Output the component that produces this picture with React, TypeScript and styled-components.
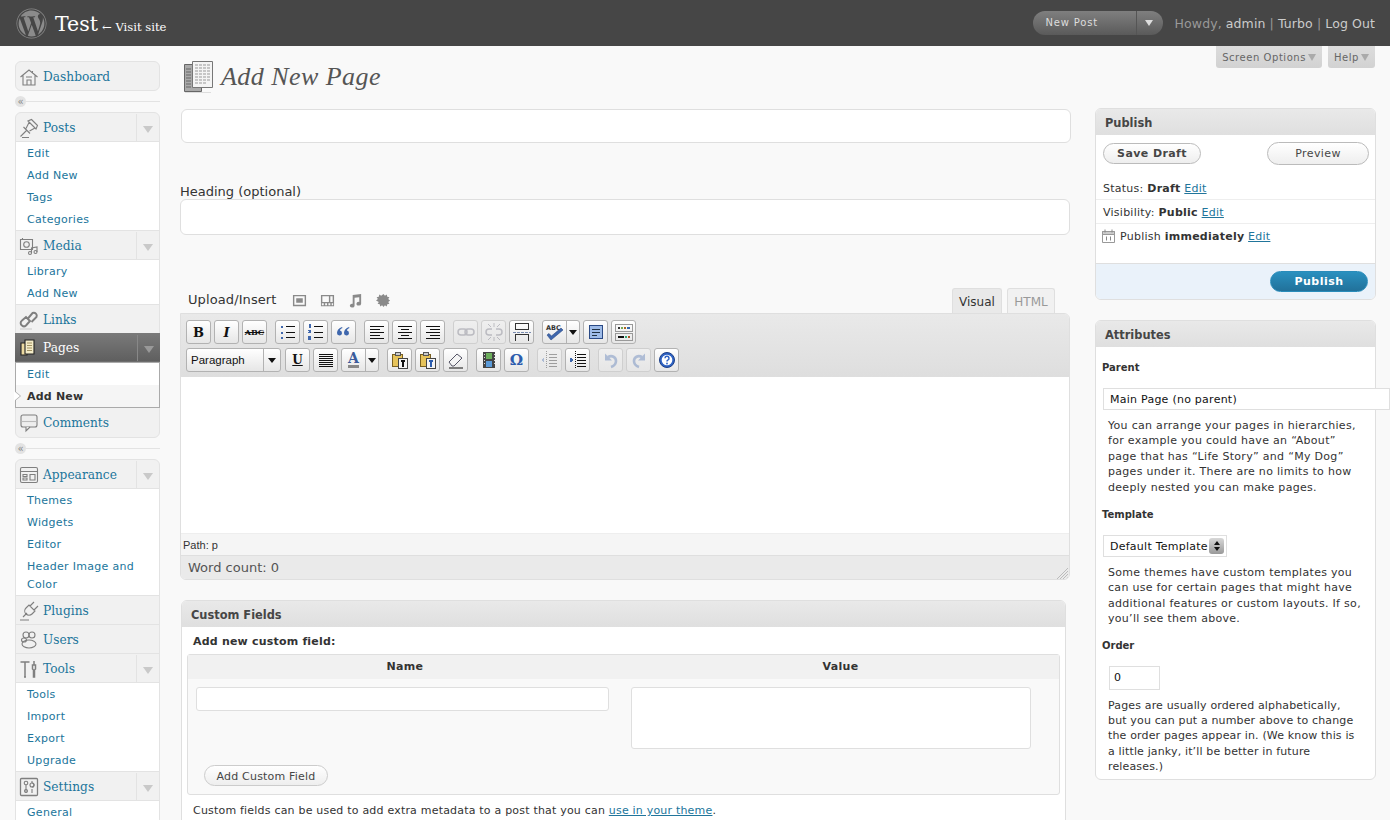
import React from 'react';
import styled, { createGlobalStyle, css } from 'styled-components';
import { FaWordpress } from 'react-icons/fa';

const GlobalStyle = createGlobalStyle`
    html, body { margin: 0; padding: 0; height: 820px; overflow: hidden; background: #f9f9f9; }
    body { font-family: "DejaVu Sans", Verdana, sans-serif; font-size: 11px; color: #333; }
    * { box-sizing: border-box; }
`;

const SERIF = '"DejaVu Serif", Georgia, serif';

const Page = styled.div`
    width: 1390px;
    height: 820px;
    overflow: hidden;
`;

/* top bar */
const TopBar = styled.header`
    display: flex;
    align-items: center;
    height: 46px;
    padding: 0 15px 0 16px;
    background: #464646;
    color: #fff;
`;

const Logo = styled(FaWordpress)`
    width: 31px;
    height: 31px;
    color: #8b8b8b;
    flex: none;
`;

const SiteName = styled.span`
    margin: 2px 0 0 8px;
    font-family: ${SERIF};
    font-size: 20.5px;
    color: #fff;
`;

const VisitSite = styled.a`
    margin: 7px 0 0 4px;
    font-family: ${SERIF};
    font-size: 11.6px;
    color: #fff;
`;

const NewPost = styled.div`
    display: flex;
    align-items: stretch;
    width: 130px;
    height: 24px;
    margin-left: auto;
    border-radius: 12px;
    background: linear-gradient(#7f7f7f, #5a5a5a);
    color: #ddd;
    font-size: 10px;
    letter-spacing: .8px;
`;

const NewPostLabel = styled.span`
    flex: 1;
    padding-left: 13px;
    line-height: 24px;
`;

const NewPostToggle = styled.span`
    display: flex;
    align-items: center;
    justify-content: center;
    width: 27px;
    border-left: 1px solid #555;
    &::after {
        content: '';
        margin-right: 2px;
        border: 4px solid transparent;
        border-top: 6px solid #ddd;
        border-bottom: 0;
    }
`;

const UserInfo = styled.div`
    margin-left: 12px;
    font-size: 12.5px;
    letter-spacing: .1px;
    color: #999;
    a { color: #ccc; }
`;

/* layout */
const Body = styled.div`
    display: flex;
    align-items: flex-start;
`;

const Sidebar = styled.nav`
    flex: none;
    width: 145px;
    margin: 15px 0 0 15px;
`;

const Main = styled.main`
    flex: 1;
    min-width: 0;
    padding-left: 20px;
`;

const ScreenMeta = styled.div`
    display: flex;
    justify-content: flex-end;
    gap: 6px;
    padding-right: 15px;
    height: 22px;
    margin-bottom: -7px;
`;

const MetaTab = styled.button`
    display: flex;
    align-items: center;
    gap: 2px;
    height: 22px;
    padding: 0 6px;
    border: 0;
    border-radius: 0 0 3px 3px;
    background: linear-gradient(#dcdcdc, #d2d2d2);
    font: 10px "DejaVu Sans", sans-serif;
    letter-spacing: .55px;
    color: #666;
    &::after {
        content: '';
        border: 4px solid transparent;
        border-top: 7px solid #aaa;
        border-bottom: 0;
    }
`;

const TitleRow = styled.div`
    display: flex;
    align-items: center;
    height: 32px;
    margin-bottom: 15px;
`;

const TitleIcon = styled.svg`
    width: 29px;
    height: 32px;
    margin-left: 4px;
    flex: none;
`;

const PageTitle = styled.h1`
    margin: 0 0 0 8px;
    font-family: "Liberation Serif", Georgia, serif;
    font-style: italic;
    font-weight: 400;
    font-size: 26px;
    letter-spacing: .45px;
    color: #555;
`;

const Columns = styled.div`
    display: flex;
    gap: 24px;
`;

const LeftColumn = styled.div`
    flex: none;
    width: 891px;
`;

const RightColumn = styled.aside`
    flex: none;
    width: 281px;
    display: flex;
    flex-direction: column;
    gap: 20px;
`;

/* sidebar menu */
const MenuGroup = styled.ul`
    list-style: none;
    margin: 0;
    padding: 0;
    border: 1px solid #e3e3e3;
    border-radius: 6px;
    background: #f1f1f1;
`;

const Separator = styled.div`
    display: flex;
    align-items: center;
    height: 11px;
    margin: 5px 0;
    &::after {
        content: '';
        flex: 1;
        height: 1px;
        background: #e3e3e3;
    }
`;

const SeparatorKnob = styled.span`
    display: flex;
    align-items: center;
    justify-content: center;
    width: 11px;
    height: 11px;
    border-radius: 50%;
    background: #e3e3e3;
    color: #888;
    font-size: 10px;
    line-height: 1;
`;

const MenuHead = styled.div<{ $active?: boolean; $single?: boolean; $flat?: boolean }>`
    display: flex;
    align-items: center;
    height: ${p => (p.$single ? 28 : 29)}px;
    padding: 1px 0 0 3px;
    border-bottom: 1px solid #e3e3e3;
    font-family: ${SERIF};
    font-size: 12.2px;
    color: #21759b;
    ${p => (p.$single || p.$flat) && 'border-bottom: 0;'}
    ${p => p.$active && css`
        margin: -1px -1px 0;
        padding: 2px 0 0 4px;
        border-bottom: 1px solid #6d6d6d;
        background: linear-gradient(#7a7a7a, #5f5f5f);
        color: #fff;
    `}
`;

const MenuLabel = styled.span`
    flex: 1;
    margin-left: 4px;
`;

const MenuToggle = styled.span<{ $active?: boolean }>`
    display: flex;
    align-items: center;
    justify-content: center;
    align-self: stretch;
    width: 23px;
    border-left: 1px solid ${p => (p.$active ? '#888' : '#e3e3e3')};
    &::after {
        content: '';
        border: 5px solid transparent;
        border-top: 7px solid ${p => (p.$active ? '#999' : '#c9c9c9')};
        border-bottom: 0;
        margin-top: 3px;
    }
`;

const MenuIcon = styled.svg.attrs({ viewBox: '0 0 20 20' })`
    width: 20px;
    height: 20px;
    flex: none;
    fill: none;
    stroke: #7f7f7f;
    stroke-width: 1.1;
`;

const SubMenu = styled.ul<{ $active?: boolean }>`
    list-style: none;
    margin: 0;
    padding: 0;
    background: #fff;
    border-bottom: 1px solid #e3e3e3;
    ${p => p.$active && css`
        margin: 0 -1px;
        border: 1px solid #aaa;
    `}
`;

const SubItem = styled.li<{ $current?: boolean }>`
    position: relative;
    padding: 3px 8px 1px 11px;
    line-height: 18px;
    font-size: 11px;
    letter-spacing: .3px;
    color: #21759b;
    ${p => p.$current && css`
        font-weight: 700;
        letter-spacing: .2px;
        color: #333;
        background: #f5f5f5;
        &::before, &::after {
            content: '';
            position: absolute;
            top: 6px;
            border: 5px solid transparent;
            border-right: 0;
        }
        &::before { left: -1px; border-left: 6px solid #aaa; }
        &::after { left: -2px; border-left: 6px solid #fff; }
    `}
`;

/* left column */
const TextField = styled.input<{ $h: number }>`
    display: block;
    width: 890px;
    height: ${p => p.$h}px;
    background: #fff;
    border: 1px solid #dfdfdf;
    border-radius: 6px;
    outline: none;
`;

const FieldLabel = styled.label`
    display: block;
    height: 16px;
    font-size: 13px;
    line-height: 18px;
    color: #333;
`;

const TitleField = styled.div`
    padding: 1px 0 0 1px;
    margin-bottom: 40px;
`;

const MediaRow = styled.div`
    display: flex;
    align-items: flex-end;
    height: 25px;
    margin-top: 53px;
    padding: 0 16px 0 8px;
`;

const UploadLabel = styled.span`
    align-self: center;
    margin: 0 15px 2px 0;
    font-size: 13px;
    letter-spacing: .1px;
    color: #333;
`;

const MediaIcon = styled.svg.attrs({ viewBox: '0 0 16 16' })`
    align-self: center;
    width: 15px;
    height: 15px;
    margin-right: 13px;
    fill: #8a8a8a;
    flex: none;
`;

const EditorTabs = styled.div`
    display: flex;
    gap: 5px;
    margin-left: auto;
    align-self: stretch;
`;

const EditorTab = styled.span<{ $active?: boolean }>`
    display: flex;
    align-items: center;
    justify-content: center;
    height: 25px;
    width: ${p => (p.$active ? 50 : 48)}px;
    padding-top: 2px;
    border: 1px solid #dfdfdf;
    border-bottom: 0;
    border-radius: 3px 3px 0 0;
    font-size: 12px;
    color: ${p => (p.$active ? '#333' : '#999')};
    background: ${p => (p.$active ? '#e9e9e9' : '#f1f1f1')};
`;

const Editor = styled.div`
    width: 890px;
    border: 1px solid #dfdfdf;
    border-radius: 0 6px 6px 6px;
    overflow: hidden;
`;

const Toolbar = styled.div`
    display: flex;
    flex-direction: column;
    gap: 4px;
    height: 63px;
    padding: 6px 5px 0;
    background: linear-gradient(#e9e9e9, #dedede);
`;

const ToolRow = styled.div`
    display: flex;
    gap: 8px;
    height: 24px;
`;

const ToolGroup = styled.div`
    display: flex;
    gap: 3px;
`;

const ToolButton = styled.button<{ $off?: boolean }>`
    display: flex;
    align-items: center;
    justify-content: center;
    width: 25px;
    height: 24px;
    padding: 0;
    border: 1px solid ${p => (p.$off ? '#cfcfcf' : '#b2b2b2')};
    border-radius: 3px;
    background: ${p => (p.$off ? 'linear-gradient(#efefef, #e6e6e6)' : 'linear-gradient(#fff, #e6e6e6)')};
    color: #111;
    font-family: "DejaVu Serif", serif;
    font-size: 13px;
    font-weight: 700;
    line-height: 1;
    svg { opacity: ${p => (p.$off ? 0.35 : 1)}; }
`;

const SplitButton = styled.div`
    display: flex;
    width: 38px;
    height: 24px;
    border: 1px solid #b2b2b2;
    border-radius: 3px;
    background: linear-gradient(#fff, #e6e6e6);
`;

const SplitMain = styled.span`
    flex: 1;
    display: flex;
    align-items: center;
    justify-content: center;
    border-right: 1px solid #b2b2b2;
`;

const SplitArrow = styled.span`
    display: flex;
    align-items: center;
    justify-content: center;
    width: 12px;
    &::after {
        content: '';
        border: 4px solid transparent;
        border-top: 5px solid #111;
        border-bottom: 0;
    }
`;

const FormatSelect = styled(SplitButton)`
    width: 95px;
    margin-right: 1px;
    font-family: "Liberation Sans", sans-serif;
    font-size: 11.5px;
    color: #111;
`;

const FormatLabel = styled(SplitMain)`
    justify-content: flex-start;
    padding-left: 4px;
`;

const FormatArrow = styled(SplitArrow)`
    width: 16px;
`;

const ToolIcon = styled.svg.attrs({ viewBox: '0 0 20 20' })`
    width: 20px;
    height: 20px;
    fill: none;
    stroke: #111;
    stroke-width: 1;
    shape-rendering: crispEdges;
`;

const RoundIcon = styled(ToolIcon)`
    shape-rendering: auto;
`;

const ItalicGlyph = styled.span`
    font-style: italic;
`;

const StrikeGlyph = styled.span`
    font-size: 8px;
    text-decoration: line-through;
`;

const UnderGlyph = styled.span`
    font-size: 12px;
    text-decoration: underline;
`;

const OmegaGlyph = styled.span`
    font-size: 15px;
    color: #2c5cad;
`;

const ColorGlyph = styled.span`
    display: inline-block;
    font: 700 14px ${SERIF};
    color: #3b5c9c;
    line-height: 13px;
    border-bottom: 3px solid #888;
`;

const SpellText = styled.text`
    font: 700 6.500px "DejaVu Sans", sans-serif;
    fill: #333;
    stroke: none;
`;

const EditArea = styled.div`
    height: 156px;
    background: #fff;
`;

const PathBar = styled.div`
    height: 22px;
    padding: 5px 0 0 2px;
    border-top: 1px solid #eee;
    background: #f5f5f5;
    font-family: "Liberation Sans", sans-serif;
    font-size: 11px;
    color: #333;
`;

const WordCount = styled.div`
    display: flex;
    align-items: center;
    justify-content: space-between;
    height: 24px;
    padding: 0 1px 0 7px;
    border-top: 1px solid #dfdfdf;
    background: #eaeaea;
    font-size: 13px;
    color: #555;
`;

const Grip = styled.svg`
    align-self: flex-end;
    width: 12px;
    height: 12px;
    stroke: #bbb;
`;

/* post boxes */
const Postbox = styled.section<{ $w?: number }>`
    width: ${p => (p.$w ? `${p.$w}px` : 'auto')};
    background: #fff;
    border: 1px solid #dfdfdf;
    border-radius: 6px;
`;

const CustomBox = styled(Postbox)`
    margin: 20px 0 0 1px;
`;

const BoxHeader = styled.h3`
    margin: 0;
    height: 26px;
    padding-left: 9px;
    border-radius: 5px 5px 0 0;
    background: linear-gradient(#e9e9e9, #dfdfdf);
    font-size: 11.4px;
    font-weight: 700;
    line-height: 28px;
    color: #464646;
`;

const PublishActions = styled.div`
    display: flex;
    align-items: center;
    justify-content: space-between;
    height: 41px;
    padding: 0 6px 5px 7px;
`;

const PillButton = styled.button<{ $w: number; $h: number; $strong?: boolean }>`
    width: ${p => p.$w}px;
    height: ${p => p.$h}px;
    padding: 0;
    border: 1px solid #bbb;
    border-radius: 12px;
    background: linear-gradient(#fff, #eee);
    font-family: "DejaVu Sans", sans-serif;
    font-size: 11px;
    letter-spacing: .4px;
    font-weight: ${p => (p.$strong ? 700 : 400)};
    color: #464646;
`;

const MiscRow = styled.div<{ $last?: boolean }>`
    display: flex;
    align-items: center;
    gap: 4px;
    height: ${p => (p.$last ? 39 : 24)}px;
    padding: ${p => (p.$last ? '0 0 15px 6px' : '2px 0 0 7px')};
    ${p => !p.$last && 'border-bottom: 1px solid #eee;'}
    font-size: 11px;
    letter-spacing: .25px;
    b { color: #333; }
    a { color: #21759b; text-decoration: underline; }
`;

const CalendarIcon = styled.svg.attrs({ viewBox: '0 0 14 14' })`
    width: 14px;
    height: 14px;
    flex: none;
`;

const PublishFooter = styled.div`
    display: flex;
    align-items: center;
    justify-content: flex-end;
    height: 36px;
    padding-right: 7px;
    border-top: 1px solid #dfdfdf;
    border-radius: 0 0 5px 5px;
    background: #eaf2fa;
`;

const PublishButton = styled.button`
    width: 98px;
    height: 21px;
    padding: 0;
    border: 1px solid #298cba;
    border-radius: 11px;
    background: linear-gradient(#2a90bf, #21719a);
    font: 700 11px "DejaVu Sans", sans-serif;
    letter-spacing: .5px;
    color: #fff;
`;

const AttrBody = styled.div`
    padding: 0 7px 4px 6px;
`;

const AttrTitle = styled.p<{ $top: number }>`
    margin: ${p => p.$top}px 0 0;
    height: 14px;
    font-size: 10px;
    font-weight: 700;
    line-height: 14px;
    color: #333;
`;

const AttrSelect = styled.div<{ $w: number; $top: number }>`
    display: flex;
    align-items: center;
    justify-content: space-between;
    width: ${p => p.$w}px;
    height: 22px;
    margin: ${p => p.$top}px 0 0 1px;
    padding: 0 0 0 6px;
    border: 1px solid #dfdfdf;
    background: #fff;
    font-size: 11px;
    letter-spacing: .25px;
    color: #111;
    white-space: nowrap;
`;

const SpinBox = styled.span`
    display: flex;
    flex-direction: column;
    align-items: center;
    justify-content: center;
    gap: 2px;
    width: 15px;
    height: 16px;
    margin-right: 2px;
    border-radius: 3px;
    background: linear-gradient(#d8d8d8, #999);
    &::before, &::after {
        content: '';
        border: 3px solid transparent;
    }
    &::before { border-bottom: 4px solid #111; border-top: 0; }
    &::after { border-top: 4px solid #111; border-bottom: 0; }
`;

const AttrText = styled.p<{ $top: number; $broken?: boolean }>`
    max-width: ${p => (p.$broken ? 268 : 261)}px;
    margin: ${p => p.$top}px 0 0 6px;
    font-size: 11px;
    line-height: 15.4px;
    letter-spacing: ${p => (p.$broken ? 0.15 : 0.3)}px;
    color: #333;
`;

const OrderInput = styled.div`
    width: 51px;
    height: 24px;
    margin: 13px 0 0 7px;
    padding-left: 4px;
    border: 1px solid #dfdfdf;
    font-size: 11px;
    line-height: 22px;
    color: #111;
`;

const CustomIntro = styled.p`
    margin: 0;
    height: 27px;
    padding-left: 11px;
    font-size: 11px;
    font-weight: 700;
    letter-spacing: .2px;
    line-height: 29px;
    color: #333;
`;

const MetaTable = styled.div`
    width: 873px;
    margin-left: 5px;
    border: 1px solid #dfdfdf;
    border-radius: 3px;
    background: #f9f9f9;
`;

const MetaHead = styled.div`
    display: grid;
    grid-template-columns: 434px 1fr;
    height: 24px;
    background: #f1f1f1;
    font-size: 11px;
    font-weight: 700;
    line-height: 23px;
    letter-spacing: .3px;
    text-align: center;
    color: #333;
`;

const MetaBody = styled.div`
    display: grid;
    grid-template-columns: 434px 1fr;
    padding: 8px 0 8px;
`;

const MetaCell = styled.div<{ $left?: boolean }>`
    padding-left: ${p => (p.$left ? 8 : 9)}px;
`;

const MetaName = styled.input`
    display: block;
    width: 413px;
    height: 24px;
    background: #fff;
    border: 1px solid #dfdfdf;
    border-radius: 3px;
    outline: none;
`;

const MetaValue = styled.textarea`
    display: block;
    width: 400px;
    height: 62px;
    background: #fff;
    border: 1px solid #dfdfdf;
    border-radius: 3px;
    resize: none;
    outline: none;
`;

const AddField = styled.button`
    display: block;
    width: 124px;
    height: 21px;
    margin: 54px 0 0 8px;
    padding: 0 0 0 0;
    border: 1px solid #ccc;
    border-radius: 11px;
    background: linear-gradient(#fff, #eee);
    font: 11px/21px "DejaVu Sans", sans-serif;
    letter-spacing: .2px;
    color: #464646;
`;

const CustomNote = styled.p`
    margin: 9px 0 40px 11px;
    font-size: 11px;
    letter-spacing: .2px;
    color: #333;
    a { color: #21759b; text-decoration: underline; }
`;

/* icons */
const menuIcons: Record<string, React.ReactNode> = {
    Dashboard: <path d="M1.500 10 10 3l8.500 7M4 8.500V18h12V8.500M8 18v-5h4v5M13.500 4v3M7 10h6" />,
    Posts: <path d="M1.500 18.500 7.500 12.500M4.500 9 11 15.500M7 10.500 10 4.500M10.500 13 16 10M9 3l8 8 1.500-3.500L12.500 1.500zM3 19.500h7" />,
    Media: <><path d="M1.500 3.500h12v10h-12zM3.500 2v1.500" /><circle cx="7.500" cy="8.500" r="2.800" /><circle cx="11" cy="17" r="1.500" /><circle cx="16.500" cy="16" r="1.500" /><path d="M12.500 17v-5l5.500-1v5" /></>,
    Links: <><path d="M3 15.500a3 3 0 0 1 0-5l4-3.500 4 4-4 4.500a3 3 0 0 1-4 0z" strokeWidth="2" /><path d="M8.500 9l5-6a3 3 0 0 1 4 4l-5 5" strokeWidth="2" /><path d="M1 19h12" stroke="#ccc" /></>,
    Pages: <><path d="M2 5h6v12H2z" fill="#ecd9a0" stroke="#222" /><path d="M6 2h9v14H6z" fill="#f4ecc8" stroke="#222" /><path d="M8 5h5M8 7.500h5M8 10h5M8 12.500h5" stroke="#a09060" /></>,
    Comments: <><rect x="2" y="2" width="16" height="12" rx="2" fill="#eee" /><path d="M2.500 8.500h15" stroke="#bbb" /><path d="M7 14v4l4-4" fill="#eee" /></>,
    Appearance: <><rect x="1.500" y="2.500" width="17" height="15" rx="1.500" /><path d="M1.500 6.500h17M4 9.500h4v2H4zM4 13h4v2H4zM11 9.500h5v5.500h-5z" /></>,
    Plugins: <path d="M4 16l4-4M7 7l3-3 6 6-3 3a4 4 0 0 1-6-6zM11 5l4-4M15 9l4-4M1 19h9" />,
    Users: <><circle cx="7" cy="5" r="3" /><circle cx="13" cy="5" r="3" /><ellipse cx="10" cy="14" rx="7" ry="4" /><ellipse cx="5" cy="10" rx="2.500" ry="2" /></>,
    Tools: <path d="M1.500 3h9M6 3v15M5 18h2M15 2v4M13.500 6h3v4l-1 1v7h-1v-7l-1-1z" strokeWidth="1.500" />,
    Settings: <><rect x="1.500" y="1.500" width="17" height="17" rx="1" strokeWidth="1.300" /><circle cx="7" cy="6" r="1.800" /><path d="M7 8v8M13 4v2M13 12v4M13 10a2 2 0 0 0 0-4" /><circle cx="13" cy="8" r="2" /><circle cx="7" cy="14" r="1.500" /></>,
};

type SubLink = { label: React.ReactNode; current?: boolean };
type MenuEntry = { label: string; subs?: SubLink[]; active?: boolean; single?: boolean; flat?: boolean };

const links = (...labels: string[]): SubLink[] => labels.map(label => ({ label }));

const menuGroups: MenuEntry[][] = [
    [{ label: 'Dashboard', single: true }],
    [
        { label: 'Posts', subs: links('Edit', 'Add New', 'Tags', 'Categories') },
        { label: 'Media', subs: links('Library', 'Add New') },
        { label: 'Links' },
        { label: 'Pages', active: true, subs: [{ label: 'Edit' }, { label: 'Add New', current: true }] },
        { label: 'Comments', flat: true },
    ],
    [
        { label: 'Appearance', subs: links('Themes', 'Widgets', 'Editor', 'Header Image and Color') },
        { label: 'Plugins' },
        { label: 'Users' },
        { label: 'Tools', subs: links('Tools', 'Import', 'Export', 'Upgrade') },
        { label: 'Settings', subs: links('General') },
    ],
];

const lines = (...rows: [number, number, number][]) => rows.map(([y, a, b]) => `M${a} ${y}.5H${b}`).join('');

const BLUE = '#3f67ad';

const ListBullets = () => (
    <ToolIcon>
        <path d={lines([4, 8, 17], [10, 8, 17], [15, 8, 17])} />
        <path d="M3 4h2v2H3zM3 9.500h2v2H3zM3 15h2v2H3z" fill={BLUE} stroke="none" />
    </ToolIcon>
);

const ListNumbers = () => (
    <ToolIcon>
        <path d={lines([4, 8, 17], [10, 8, 17], [15, 8, 17])} />
        <path d="M3 2h2v4H3zM2 8h3v1H2zM3 9h2v1H3zM2 10h3v1H2zM2 14h3v4H2z" fill={BLUE} stroke="none" />
    </ToolIcon>
);

const Quote = () => (
    <RoundIcon>
        <path d="M8 5C5 6 3 8 3 11a2.500 2.500 0 1 0 3-2.400C6 7.500 7 6.500 8.500 6zM15 5c-3 1-5 3-5 6a2.500 2.500 0 1 0 3-2.400c0-1.100 1-2.100 2.500-2.600z" fill={BLUE} stroke="none" />
    </RoundIcon>
);

const AlignLeft = () => <ToolIcon><path d={lines([4, 3, 17], [7, 3, 13], [10, 3, 17], [13, 3, 13], [16, 3, 17])} strokeWidth="1.400" /></ToolIcon>;
const AlignCenter = () => <ToolIcon><path d={lines([4, 3, 17], [7, 6, 14], [10, 3, 17], [13, 6, 14], [16, 3, 17])} strokeWidth="1.400" /></ToolIcon>;
const AlignRight = () => <ToolIcon><path d={lines([4, 3, 17], [7, 7, 17], [10, 3, 17], [13, 7, 17], [16, 3, 17])} strokeWidth="1.400" /></ToolIcon>;
const Justify = () => <ToolIcon><path d={lines([4, 3, 17], [6, 3, 17], [8, 3, 17], [10, 3, 17], [12, 3, 17], [14, 3, 17], [16, 3, 17])} /></ToolIcon>;

const LinkIcon = () => (
    <RoundIcon>
        <rect x="2" y="7" width="9" height="6" rx="3" stroke="#667" strokeWidth="1.500" />
        <rect x="9" y="7" width="9" height="6" rx="3" stroke="#667" strokeWidth="1.500" />
    </RoundIcon>
);

const UnlinkIcon = () => (
    <RoundIcon>
        <path d="M8 7H5a3 3 0 0 0 0 6h3M12 7h3a3 3 0 0 1 0 6h-3" stroke="#667" strokeWidth="1.500" />
        <path d="M10 1v4M10 15v4M4 2l3 3M16 2l-3 3M4 18l3-3M16 18l-3-3" stroke="#667" />
    </RoundIcon>
);

const MoreIcon = () => (
    <ToolIcon>
        <path d="M3.500 1.500h13v6h-13zM3.500 19V12.500h13V19" stroke="#333" />
        <path d="M1 10h18" stroke="#7a8cb0" strokeDasharray="3 1" />
    </ToolIcon>
);

const SpellIcon = () => (
    <RoundIcon>
        <SpellText x="1" y="8">ABC</SpellText>
        <path d="M2 13l4 5L18 8l-2-2-9.500 8L4 11.500z" fill="#3f67ad" stroke="#2b4a85" strokeWidth=".6" />
    </RoundIcon>
);

const FullscreenIcon = () => (
    <ToolIcon>
        <path d="M3.500 3.500h13v13h-13z" fill="#9fbce8" stroke="#2b4a85" strokeWidth="1.200" />
        <path d="M6 7.500h8M6 10.500h8M6 13.500h5" stroke="#234" />
    </ToolIcon>
);

const KitchenIcon = () => (
    <ToolIcon>
        <path d="M1.500 2.500h17v7h-17zM1.500 11.500h17v7h-17z" stroke="#999" />
        <path d="M4 5h2v2H4z" fill="#333" stroke="none" />
        <path d="M7 5h2v2H7z" fill="#7a5" stroke="none" />
        <path d="M10 5h2v2h-2z" fill="#a62" stroke="none" />
        <path d="M13 5h3v2h-3z" fill="#36a" stroke="none" />
        <path d="M4 14h6v2H4z" fill="#111" stroke="none" />
        <path d="M11 14h2v2h-2z" fill="#3a7" stroke="none" />
        <path d="M14 14h2v2h-2z" fill="#a52" stroke="none" />
    </ToolIcon>
);

const PasteIcon = ({ word }: { word?: boolean }) => (
    <ToolIcon>
        <path d="M2.500 4.500h10v12h-10z" fill="#e6c35a" stroke="#7a6020" />
        <path d="M5 2.500h5v3H5z" fill="#ccc" stroke="#555" />
        <path d="M8.500 8.500h9v10h-9z" fill="#f4f4f4" stroke="#444" />
        <path d="M11 11h4M13 11v6" stroke={word ? '#2c5cad' : '#111'} strokeWidth="1.600" />
    </ToolIcon>
);

const EraserIcon = () => (
    <RoundIcon>
        <path d="M3 12l8-8 5 4-8 8H6z" fill="#f5f5f5" stroke="#556" />
        <path d="M3 18h14" stroke="#111" />
    </RoundIcon>
);

const FilmIcon = () => (
    <ToolIcon>
        <path d="M4 2h12v16H4z" fill="#444" stroke="none" />
        <path d="M7 3h6v6H7z" fill="#6cae5c" stroke="none" />
        <path d="M7 11h6v6H7z" fill="#5a9ad8" stroke="none" />
        <path d="M5 4v12M15 4v12" stroke="#ddd" strokeDasharray="1 2" />
    </ToolIcon>
);

const OutdentIcon = () => (
    <ToolIcon>
        <path d={lines([4, 9, 17], [7, 9, 17], [10, 9, 17], [13, 9, 17], [16, 9, 17])} strokeWidth="1.200" />
        <path d="M6 1v18" stroke="#111" strokeDasharray="1 1" />
        <path d="M1 10l3-2.500v5z" fill={BLUE} stroke="none" />
    </ToolIcon>
);

const IndentIcon = () => (
    <ToolIcon>
        <path d={lines([4, 9, 18], [7, 9, 18], [10, 9, 18], [13, 9, 18], [16, 9, 18])} strokeWidth="1.200" />
        <path d="M7 1v18" stroke="#111" strokeDasharray="1 1" />
        <path d="M6 10L2 7.500v5z" fill={BLUE} stroke="none" />
    </ToolIcon>
);

const UndoIcon = () => (
    <RoundIcon>
        <path d="M7 7c4-2 8 0 8 4 0 3-2 5-5 6" stroke={BLUE} strokeWidth="2.600" />
        <path d="M4 3.500v7h7z" fill={BLUE} stroke="none" />
    </RoundIcon>
);

const RedoIcon = () => (
    <RoundIcon>
        <path d="M13 7c-4-2-8 0-8 4 0 3 2 5 5 6" stroke={BLUE} strokeWidth="2.600" />
        <path d="M16 3.500v7H9z" fill={BLUE} stroke="none" />
    </RoundIcon>
);

const HelpIcon = () => (
    <RoundIcon>
        <circle cx="10" cy="10" r="7.500" fill="#2f63c4" stroke="#1c3f86" />
        <circle cx="10" cy="10" r="5.300" fill="#fff" stroke="none" />
        <path d="M8 8.200a2 2 0 1 1 2.800 1.900c-.6.300-.8.700-.8 1.400" stroke="#2f63c4" strokeWidth="1.500" />
        <circle cx="10" cy="13.500" r=".9" fill="#2f63c4" stroke="none" />
    </RoundIcon>
);

export default function App() {
    return (
        <Page>
            <GlobalStyle />
            <TopBar>
                <Logo />
                <SiteName>Test</SiteName>
                <VisitSite>← Visit site</VisitSite>
                <NewPost>
                    <NewPostLabel>New Post</NewPostLabel>
                    <NewPostToggle />
                </NewPost>
                <UserInfo>Howdy, <a>admin</a> | <a>Turbo</a> | <a>Log Out</a></UserInfo>
            </TopBar>
            <Body>
                <Sidebar>
                    {menuGroups.map((group, i) => (
                        <React.Fragment key={i}>
                            <MenuGroup>
                                {group.map(item => (
                                    <li key={item.label}>
                                        <MenuHead $active={item.active} $single={item.single} $flat={item.flat}>
                                            <MenuIcon>{menuIcons[item.label]}</MenuIcon>
                                            <MenuLabel>{item.label}</MenuLabel>
                                            {item.subs && <MenuToggle $active={item.active} />}
                                        </MenuHead>
                                        {item.subs && (
                                            <SubMenu $active={item.active}>
                                                {item.subs.map((sub, k) => (
                                                    <SubItem key={k} $current={sub.current}>{sub.label}</SubItem>
                                                ))}
                                            </SubMenu>
                                        )}
                                    </li>
                                ))}
                            </MenuGroup>
                            {i < 2 && <Separator><SeparatorKnob>«</SeparatorKnob></Separator>}
                        </React.Fragment>
                    ))}
                </Sidebar>
                <Main>
                    <ScreenMeta>
                        <MetaTab>Screen Options</MetaTab>
                        <MetaTab>Help</MetaTab>
                    </ScreenMeta>
                    <TitleRow>
                        <TitleIcon viewBox="0 0 29 32">
                            <path d="M.500 3.500h17v27H.500z" fill="#aaa" stroke="#666" />
                            <path d="M8.500 .500h20v26h-20z" fill="#f4f4f4" stroke="#777" />
                            <path d="M11 4h15M11 7h15M11 10h15M11 13h15M11 16h15M11 19h15M11 22h11" stroke="#999" strokeDasharray="3 1" />
                            <path d="M2 8h5M2 11h5M2 14h5M2 17h5M2 20h5M2 23h5M2 26h5" stroke="#666" />
                            <path d="M1 31.500h26" stroke="#ddd" />
                        </TitleIcon>
                        <PageTitle>Add New Page</PageTitle>
                    </TitleRow>
                    <Columns>
                        <LeftColumn>
                            <TitleField><TextField $h={34} /></TitleField>
                            <FieldLabel>Heading (optional)</FieldLabel>
                            <TextField $h={36} />
                            <MediaRow>
                                <UploadLabel>Upload/Insert</UploadLabel>
                                <MediaIcon><path d="M1 2h14v12H1zM2.500 3.500v9h11v-9zM4.500 5.500h7v5h-7z" fillRule="evenodd" /></MediaIcon>
                                <MediaIcon><path d="M1 2h14v12H1zM2.500 3.500v6h7v-6zM11 3.500v6h2.500v-6zM2 11v2h2v-2zM5.500 11v2h2v-2zM9 11v2h2v-2zM12.500 11v2h1.500v-2z" fillRule="evenodd" /></MediaIcon>
                                <MediaIcon><path d="M5 2l9-1v10.500a2.500 2 0 1 1-2-2V4.500L7 5v8.500a2.500 2 0 1 1-2-2z" /></MediaIcon>
                                <MediaIcon><path d="M8 1l1.500 2 2-1.300.5 2.300 2.300.5L13 6.500l2 1.500-2 1.500 1.300 2-2.300.5-.5 2.300-2-1.300L8 15l-1.500-2-2 1.300-.5-2.300-2.300-.5 1.300-2L0 8l2-1.500-1.300-2L3 4l.5-2.300 2 1.300z" /></MediaIcon>
                                <EditorTabs>
                                    <EditorTab $active>Visual</EditorTab>
                                    <EditorTab>HTML</EditorTab>
                                </EditorTabs>
                            </MediaRow>
                            <Editor>
                                <Toolbar>
                                    <ToolRow>
                                        <ToolGroup>
                                            <ToolButton>B</ToolButton>
                                            <ToolButton><ItalicGlyph>I</ItalicGlyph></ToolButton>
                                            <ToolButton><StrikeGlyph>ABC</StrikeGlyph></ToolButton>
                                        </ToolGroup>
                                        <ToolGroup>
                                            <ToolButton><ListBullets /></ToolButton>
                                            <ToolButton><ListNumbers /></ToolButton>
                                            <ToolButton><Quote /></ToolButton>
                                        </ToolGroup>
                                        <ToolGroup>
                                            <ToolButton><AlignLeft /></ToolButton>
                                            <ToolButton><AlignCenter /></ToolButton>
                                            <ToolButton><AlignRight /></ToolButton>
                                        </ToolGroup>
                                        <ToolGroup>
                                            <ToolButton $off><LinkIcon /></ToolButton>
                                            <ToolButton $off><UnlinkIcon /></ToolButton>
                                            <ToolButton><MoreIcon /></ToolButton>
                                        </ToolGroup>
                                        <ToolGroup>
                                            <SplitButton>
                                                <SplitMain><SpellIcon /></SplitMain>
                                                <SplitArrow />
                                            </SplitButton>
                                            <ToolButton><FullscreenIcon /></ToolButton>
                                            <ToolButton><KitchenIcon /></ToolButton>
                                        </ToolGroup>
                                    </ToolRow>
                                    <ToolRow>
                                        <ToolGroup>
                                            <FormatSelect>
                                                <FormatLabel>Paragraph</FormatLabel>
                                                <FormatArrow />
                                            </FormatSelect>
                                            <ToolButton><UnderGlyph>U</UnderGlyph></ToolButton>
                                            <ToolButton><Justify /></ToolButton>
                                            <SplitButton>
                                                <SplitMain><ColorGlyph>A</ColorGlyph></SplitMain>
                                                <SplitArrow />
                                            </SplitButton>
                                        </ToolGroup>
                                        <ToolGroup>
                                            <ToolButton><PasteIcon /></ToolButton>
                                            <ToolButton><PasteIcon word /></ToolButton>
                                            <ToolButton><EraserIcon /></ToolButton>
                                        </ToolGroup>
                                        <ToolGroup>
                                            <ToolButton><FilmIcon /></ToolButton>
                                            <ToolButton><OmegaGlyph>Ω</OmegaGlyph></ToolButton>
                                        </ToolGroup>
                                        <ToolGroup>
                                            <ToolButton $off><OutdentIcon /></ToolButton>
                                            <ToolButton><IndentIcon /></ToolButton>
                                        </ToolGroup>
                                        <ToolGroup>
                                            <ToolButton $off><UndoIcon /></ToolButton>
                                            <ToolButton $off><RedoIcon /></ToolButton>
                                            <ToolButton><HelpIcon /></ToolButton>
                                        </ToolGroup>
                                    </ToolRow>
                                </Toolbar>
                                <EditArea />
                                <PathBar>Path: p</PathBar>
                                <WordCount>
                                    Word count: 0
                                    <Grip viewBox="0 0 12 12"><path d="M12 1L1 12M12 4L4 12M12 7L7 12M12 10L10 12" /></Grip>
                                </WordCount>
                            </Editor>
                            <CustomBox $w={885}>
                                <BoxHeader>Custom Fields</BoxHeader>
                                <CustomIntro>Add new custom field:</CustomIntro>
                                <MetaTable>
                                    <MetaHead><span>Name</span><span>Value</span></MetaHead>
                                    <MetaBody>
                                        <MetaCell $left>
                                            <MetaName />
                                            <AddField>Add Custom Field</AddField>
                                        </MetaCell>
                                        <MetaCell><MetaValue /></MetaCell>
                                    </MetaBody>
                                </MetaTable>
                                <CustomNote>Custom fields can be used to add extra metadata to a post that you can <a>use in your theme</a>.</CustomNote>
                            </CustomBox>
                        </LeftColumn>
                        <RightColumn>
                            <Postbox>
                                <BoxHeader>Publish</BoxHeader>
                                <PublishActions>
                                    <PillButton $w={98} $h={21} $strong>Save Draft</PillButton>
                                    <PillButton $w={102} $h={23}>Preview</PillButton>
                                </PublishActions>
                                <MiscRow><span>Status: <b>Draft</b> <a>Edit</a></span></MiscRow>
                                <MiscRow><span>Visibility: <b>Public</b> <a>Edit</a></span></MiscRow>
                                <MiscRow $last>
                                    <CalendarIcon>
                                        <path d="M.500 2.500h12v11H.500z" fill="#fff" stroke="#999" />
                                        <path d="M.500 2.500h12v3H.500z" fill="#ccc" stroke="#999" />
                                        <path d="M3 .500v3M10 .500v3M4.500 7.500v4M8.500 7.500v4" stroke="#888" />
                                    </CalendarIcon>
                                    <span>Publish <b>immediately</b> <a>Edit</a></span>
                                </MiscRow>
                                <PublishFooter><PublishButton>Publish</PublishButton></PublishFooter>
                            </Postbox>
                            <Postbox>
                                <BoxHeader>Attributes</BoxHeader>
                                <AttrBody>
                                    <AttrTitle $top={14}>Parent</AttrTitle>
                                    <AttrSelect $w={287} $top={13}>Main Page (no parent)</AttrSelect>
                                    <AttrText $top={8}>You can arrange your pages in hierarchies, for example you could have an “About” page that has “Life Story” and “My Dog” pages under it. There are no limits to how deeply nested you can make pages.</AttrText>
                                    <AttrTitle $top={13}>Template</AttrTitle>
                                    <AttrSelect $w={124} $top={13}>Default Template<SpinBox /></AttrSelect>
                                    <AttrText $top={8}>Some themes have custom templates you can use for certain pages that might have additional features or custom layouts. If so, you’ll see them above.</AttrText>
                                    <AttrTitle $top={12}>Order</AttrTitle>
                                    <OrderInput>0</OrderInput>
                                    <AttrText $top={8} $broken>Pages are usually ordered alphabetically,<br />but you can put a number above to change<br />the order pages appear in. (We know this is<br />a little janky, it’ll be better in future<br />releases.)</AttrText>
                                </AttrBody>
                            </Postbox>
                        </RightColumn>
                    </Columns>
                </Main>
            </Body>
        </Page>
    );
}
